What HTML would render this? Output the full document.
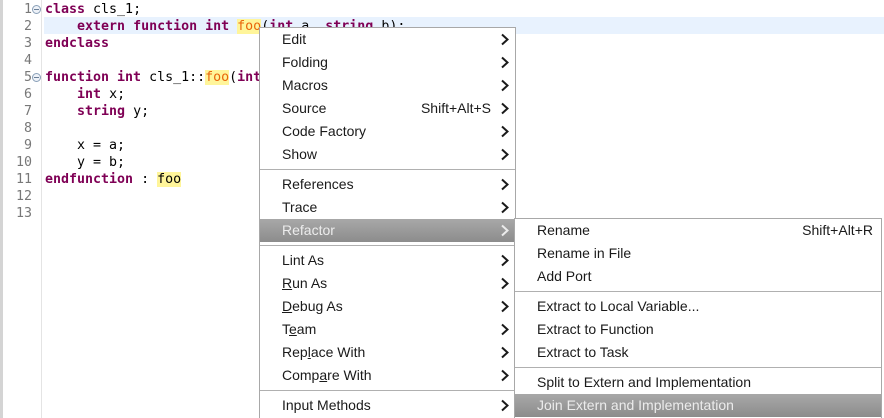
<!DOCTYPE html>
<html style="overflow:hidden;height:418px"><head><meta charset="utf-8"><style>
*{margin:0;padding:0;box-sizing:border-box}
body{width:884px;height:418px;overflow:hidden;background:#fff;position:relative;font-family:"Liberation Sans",sans-serif}
.code{position:absolute;left:45px;font-family:"DejaVu Sans Mono",monospace;font-size:13.3px;line-height:17px;white-space:pre;color:#000}
.ln{position:absolute;left:0;width:32px;text-align:right;font-family:"DejaVu Sans Mono",monospace;font-size:13.3px;line-height:17px;color:#787878;white-space:pre}
.k{color:#7f0055;font-weight:bold}
.o{background:#fff59a;color:#e8650a}
.y{background:#fff59a}
.menu{position:absolute;background:#fff;border:1px solid #a8a8a8;border-bottom:none;font-size:14px;color:#1a1a1a}
.it{position:absolute;left:0;right:0;height:23px;line-height:23px}
.it .t{position:absolute;left:22px}
.it .s{position:absolute;right:24px}
.it .a{position:absolute;right:4px;top:0;width:12px;height:23px}
.sep{position:absolute;left:0;right:0;border-top:1px solid #b0b0b0}
.hl{background:linear-gradient(#a8a8a8,#8c8c8c);color:#ececec}
u{text-decoration:underline}
.fold{position:absolute;left:32px;width:9px;height:9px;border:1px solid #8aa0b8;border-radius:50%;background:#eef2f8}
.fold:after{content:"";position:absolute;left:1px;top:3px;width:5px;height:1px;background:#6a7f98}
</style></head><body>
<div style="position:absolute;left:0;top:0;width:3px;height:418px;background:#d4d4d4"></div>
<div style="position:absolute;left:41px;top:0;width:1px;height:418px;background:#e4e4e4"></div>
<div style="position:absolute;left:44px;top:17px;width:840px;height:17px;background:#e8f2fe"></div>
<div class="fold" style="top:5px"></div>
<div class="fold" style="top:73px"></div>
<div class="ln" style="top:1px">1
2
3
4
5
6
7
8
9
10
11
12
13</div>
<div class="code" style="top:1px"><span class="k">class</span> cls_1;
    <span class="k">extern function int</span> <span class="o">foo</span>(<span class="k">int</span> a, <span class="k">string</span> b);
<span class="k">endclass</span>

<span class="k">function int</span> cls_1::<span class="o">foo</span>(<span class="k">int</span>
    <span class="k">int</span> x;
    <span class="k">string</span> y;

    x = a;
    y = b;
<span class="k">endfunction</span> : <span class="y">foo</span>
</div>

<svg width="0" height="0" style="position:absolute"><defs><symbol id="ar" viewBox="0 0 12 23"><path d="M3 6.5 L8.5 11.5 L3 16.5" fill="none" stroke="currentColor" stroke-width="2"/></symbol></defs></svg>

<div class="menu" style="left:259px;top:27px;width:257px;height:391px">
<div class="it" style="top:0"><span class="t">Edit</span><svg class="a"><use href="#ar"/></svg></div>
<div class="it" style="top:23px"><span class="t">Folding</span><svg class="a"><use href="#ar"/></svg></div>
<div class="it" style="top:46px"><span class="t">Macros</span><svg class="a"><use href="#ar"/></svg></div>
<div class="it" style="top:69px"><span class="t">Source</span><span class="s">Shift+Alt+S</span><svg class="a"><use href="#ar"/></svg></div>
<div class="it" style="top:92px"><span class="t">Code Factory</span><svg class="a"><use href="#ar"/></svg></div>
<div class="it" style="top:115px"><span class="t">Show</span><svg class="a"><use href="#ar"/></svg></div>
<div class="sep" style="top:141px"></div>
<div class="it" style="top:145px"><span class="t">References</span><svg class="a"><use href="#ar"/></svg></div>
<div class="it" style="top:168px"><span class="t">Trace</span><svg class="a"><use href="#ar"/></svg></div>
<div class="it hl" style="top:191px"><span class="t">Refactor</span><svg class="a"><use href="#ar"/></svg></div>
<div class="sep" style="top:217px"></div>
<div class="it" style="top:221px"><span class="t">Lint As</span><svg class="a"><use href="#ar"/></svg></div>
<div class="it" style="top:244px"><span class="t"><u>R</u>un As</span><svg class="a"><use href="#ar"/></svg></div>
<div class="it" style="top:267px"><span class="t"><u>D</u>ebug As</span><svg class="a"><use href="#ar"/></svg></div>
<div class="it" style="top:290px"><span class="t">T<u>e</u>am</span><svg class="a"><use href="#ar"/></svg></div>
<div class="it" style="top:313px"><span class="t">Rep<u>l</u>ace With</span><svg class="a"><use href="#ar"/></svg></div>
<div class="it" style="top:336px"><span class="t">Comp<u>a</u>re With</span><svg class="a"><use href="#ar"/></svg></div>
<div class="sep" style="top:362px"></div>
<div class="it" style="top:366px"><span class="t">Input Methods</span><svg class="a"><use href="#ar"/></svg></div>
</div>

<div class="menu" style="left:514px;top:218px;width:368px;height:200px">
<div class="it" style="top:0"><span class="t">Rename</span><span class="s" style="right:8px">Shift+Alt+R</span></div>
<div class="it" style="top:23px"><span class="t">Rename in File</span></div>
<div class="it" style="top:46px"><span class="t">Add Port</span></div>
<div class="sep" style="top:72px"></div>
<div class="it" style="top:76px"><span class="t">Extract to Local Variable...</span></div>
<div class="it" style="top:99px"><span class="t">Extract to Function</span></div>
<div class="it" style="top:122px"><span class="t">Extract to Task</span></div>
<div class="sep" style="top:148px"></div>
<div class="it" style="top:152px"><span class="t">Split to Extern and Implementation</span></div>
<div class="it hl" style="top:175px"><span class="t">Join Extern and Implementation</span></div>
</div>
</body></html>
